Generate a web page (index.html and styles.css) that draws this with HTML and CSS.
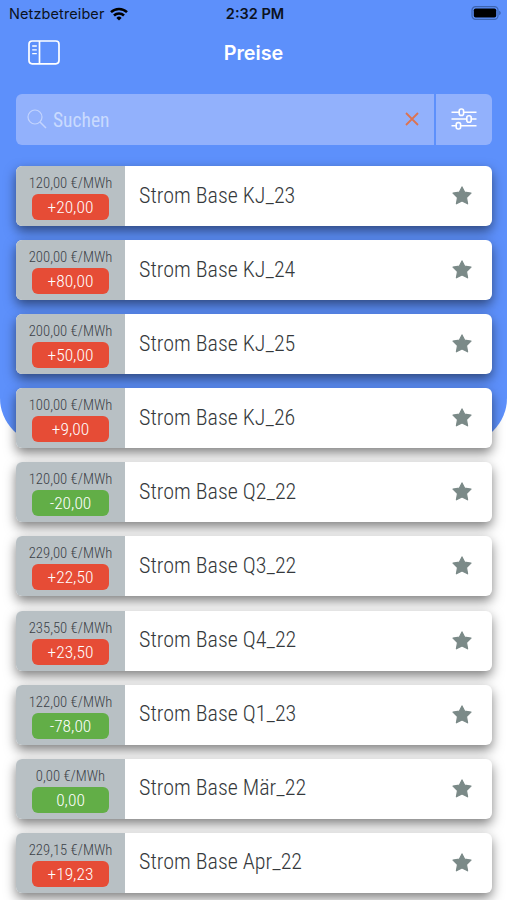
FILE: index.html
```html
<!DOCTYPE html>
<html lang="de">
<head>
  <meta charset="UTF-8" />
  <meta name="viewport" content="width=device-width, initial-scale=1.0" />
  <title>Preise</title>
  <link rel="stylesheet" href="styles.css">
</head>
<body>
  <div class="screen">
    <div class="statusbar">
      <div class="carrier">
        <span>Netzbetreiber</span>
        <svg width="18" height="14" viewBox="0 0 18 14" fill="none" stroke="#000" stroke-width="2.5">
          <path d="M1 5.2a11.4 11.4 0 0 1 16 0" />
          <path d="M4 8.5a7.1 7.1 0 0 1 10 0" />
          <path d="M6.4 10.9a3.7 3.7 0 0 1 5.2 0L9 13.5z" fill="#000" stroke="none" />
        </svg>
      </div>
      <div class="clock">2:32 PM</div>
      <svg class="battery" width="31" height="14" viewBox="0 0 31 14">
        <rect x="2" y=".7" width="26" height="12.6" rx="3.6" fill="none" stroke="#3d64b0" stroke-width="1.2" />
        <rect x="3.8" y="2.5" width="22.4" height="9" rx="1.8" />
        <path d="M29.2 4.8c2 .7 2 3.7 0 4.4z" fill="#3d64b0" />
      </svg>
    </div>

    <div class="navbar">
      <svg class="menu-icon" width="32" height="25" viewBox="0 0 32 25" fill="none" stroke="#fff" stroke-width="1.7">
        <rect x="1" y="1" width="30" height="22.8" rx="3.2" />
        <path d="M11.5 1v22.8" />
        <path d="M4.2 6h4.6M4.2 9.8h4.6M4.2 13.6h4.6" stroke-width="1.3" />
      </svg>
      <h1>Preise</h1>
    </div>

    <div class="search">
      <div class="search-field">
        <svg width="20" height="20" viewBox="0 0 20 20" fill="none" stroke="#c3d4fd" stroke-width="1.2">
          <circle cx="8" cy="8" r="7" />
          <path d="M13 13l6 6" stroke-width="1.5" />
        </svg>
        <span class="placeholder">Suchen</span>
        <svg class="clear" width="14" height="14" viewBox="0 0 14 14" fill="none" stroke="#dc7351" stroke-width="1.8">
          <path d="M1 1l12 12M13 1L1 13" />
        </svg>
      </div>
      <div class="filter">
        <svg width="26" height="22" viewBox="0 0 26 22" fill="none" stroke="#fff" stroke-width="1.6">
          <path d="M.5 4.2H8M13 4.2h12.5M.5 11h15M20.5 11h5M.5 17.8H5M10 17.8h15.5" />
          <rect x="8.2" y="1" width="4.4" height="6.4" rx="2" />
          <rect x="15.8" y="7.8" width="4.4" height="6.4" rx="2" />
          <rect x="5.2" y="14.6" width="4.4" height="6.4" rx="2" />
        </svg>
      </div>
    </div>

    <div class="list" id="list"></div>
  </div>

  <script>
    const preise = [
      ["120,00", "+20,00", "Strom Base KJ_23"],
      ["200,00", "+80,00", "Strom Base KJ_24"],
      ["200,00", "+50,00", "Strom Base KJ_25"],
      ["100,00", "+9,00", "Strom Base KJ_26"],
      ["120,00", "-20,00", "Strom Base Q2_22"],
      ["229,00", "+22,50", "Strom Base Q3_22"],
      ["235,50", "+23,50", "Strom Base Q4_22"],
      ["122,00", "-78,00", "Strom Base Q1_23"],
      ["0,00", "0,00", "Strom Base Mär_22"],
      ["229,15", "+19,23", "Strom Base Apr_22"]
    ];

    document.getElementById("list").innerHTML = preise.map(([preis, diff, name]) => `
      <div class="card">
        <div class="price">
          <div class="value">${preis} €/MWh</div>
          <div class="diff ${diff[0] === "+" ? "up" : "down"}">${diff}</div>
        </div>
        <div class="name">${name}</div>
        <svg class="star" width="20" height="19" viewBox="0 0 20 19">
          <path d="M10 .9l2.7 5.3 6.3.9-4.5 4.4 1.1 6.3-5.6-2.9-5.6 2.9 1.1-6.3L1 7.100l6.300-.9z" />
        </svg>
      </div>`).join("");
  </script>
</body>
</html>
```
FILE: styles.css
```css
* {
  box-sizing: border-box;
}
body {
  margin: 0;
  background: #fff;
  font-family: "Roboto Condensed", Roboto, sans-serif;
  font-stretch: 75%;
  font-weight: 300;
}
.screen {
  height: 900px;
  overflow: hidden;
  position: relative;
  z-index: 0;
}
/* blue backdrop with round bottom corners */
.screen::before {
  content: "";
  position: absolute;
  z-index: -1;
  top: 0;
  left: 0;
  right: 0;
  height: 444px;
  background: #5d90fb;
  border-radius: 0 0 46px 46px;
}
.statusbar {
  display: grid;
  grid-template-columns: 1fr auto 1fr;
  align-items: center;
  height: 27px;
  padding: 0 6px 0 9px;
  font-family: Inter, sans-serif;
  font-stretch: normal;
  font-size: 14.5px;
  font-weight: 400;
  color: #0b1220;
}
.carrier {
  display: flex;
  align-items: center;
  gap: 6px;
  letter-spacing: 0.1px;
}
.clock {
  font-weight: 600;
}
.battery {
  justify-self: end;
  margin-bottom: 1px;
}
.navbar {
  display: grid;
  grid-template-columns: 1fr auto 1fr;
  align-items: center;
  height: 51px;
  padding: 0 28px;
}
.navbar h1 {
  margin: 0;
  font-family: Inter, sans-serif;
  font-stretch: normal;
  font-size: 19.8px;
  font-weight: 600;
  color: #fff;
}
.search {
  display: flex;
  gap: 2px;
  height: 51px;
  margin: 16px 15px 0 16px;
}
.search-field {
  flex: 1;
  display: flex;
  align-items: center;
  padding: 0 15px 2px 11px;
  background: #92b1fc;
  border-radius: 6px 0 0 6px;
}
.placeholder {
  flex: 1;
  margin: 3px 0 0 6px;
  font-size: 19.5px;
  font-weight: 400;
  color: #c9dafe;
}
.filter {
  width: 56px;
  display: flex;
  align-items: center;
  justify-content: center;
  padding-bottom: 1px;
  background: #92b1fc;
  border-radius: 0 6px 6px 0;
}
.list {
  display: flex;
  flex-direction: column;
  gap: 14.1px;
  padding: 21px 15px 0 16px;
}
.card {
  flex: none;
  display: flex;
  align-items: center;
  height: 60px;
  padding-right: 20px;
  background: #fff;
  border-radius: 6px;
  box-shadow: 0 5px 12px rgba(0, 0, 0, 0.5);
}
.price {
  width: 109px;
  height: 60px;
  display: flex;
  flex-direction: column;
  align-items: center;
  padding-top: 8px;
  background: #b8c0c4;
  border-radius: 6px 0 0 6px;
  color: #3c4248;
}
.value {
  font-size: 14.7px;
  line-height: 18px;
  margin-bottom: 2px;
}
.diff {
  width: 77px;
  height: 26px;
  border-radius: 6px;
  font-size: 17.4px;
  line-height: 26px;
  text-align: center;
  color: #fff;
}
.up {
  background: #e64c36;
}
.down {
  background: #62ae47;
}
.name {
  flex: 1;
  margin: 0 0 2px 14px;
  font-size: 22px;
  color: #35393c;
}
.star {
  margin-bottom: 1px;
  fill: #7b8a88;
  stroke: #7b8a88;
  stroke-width: 1.2;
  stroke-linejoin: round;
}
```
